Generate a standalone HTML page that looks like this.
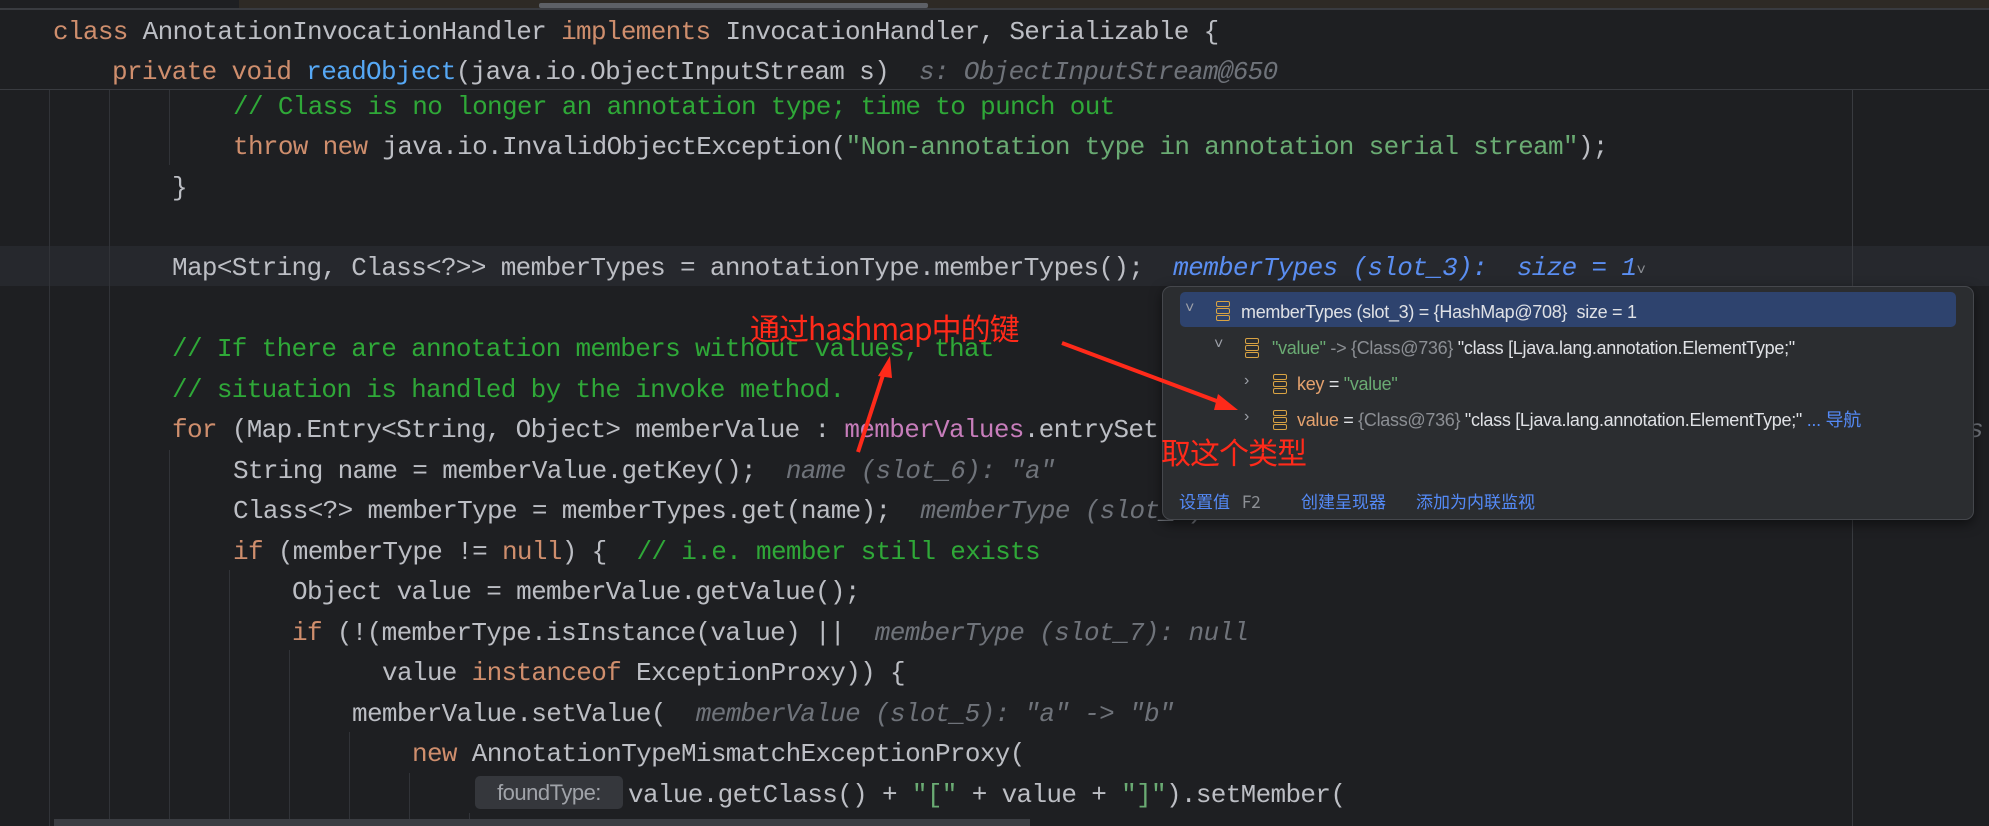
<!DOCTYPE html>
<html><head><meta charset="utf-8">
<style>
html,body{margin:0;padding:0;width:1989px;height:826px;overflow:hidden;}
body{background:#1e1f22;position:relative;font-family:"Liberation Mono",monospace;}
.l{position:absolute;height:40px;line-height:40px;font-size:26px;letter-spacing:-0.66px;color:#bcbec4;white-space:pre;}
.k{color:#cf8e6d}.m{color:#56a8f5}.c{color:#2fa838}.s{color:#6aab73}.p{color:#c77dbb}
.h{color:#6f737a;font-style:italic}
.hb{color:#5a8ef2;font-style:italic}
.g{position:absolute;width:1px;background:#313338;}
.pop{position:absolute;left:1162px;top:286px;width:810px;height:232px;background:#2b2d30;border:1px solid #45474c;border-radius:9px;box-shadow:0 4px 12px rgba(0,0,0,.5);}
.r{position:absolute;height:34px;line-height:34px;font-family:"Liberation Sans","Noto Sans CJK SC",sans-serif;font-size:18px;color:#dfe1e5;white-space:pre;letter-spacing:-0.3px}
.chev{position:absolute;font-family:"Liberation Sans",sans-serif;color:#9da0a8;font-size:16px;}
.ic{position:absolute;width:14px;height:20px;}
.ic i{display:block;height:4px;border:1.5px solid #d9a343;border-radius:2px;margin-bottom:1px}
.red{position:absolute;color:#ff2a1a;font-family:"Noto Sans CJK SC","Liberation Sans",sans-serif;font-size:30px;line-height:34px;white-space:pre;letter-spacing:-1px}
.bt{position:absolute;top:488px;font-family:"Noto Sans CJK SC","Liberation Sans",sans-serif;font-size:17px;color:#548af7;line-height:26px}
</style></head><body>
<div style="position:absolute;left:0;top:0;width:1989px;height:9px;background:#1e1f22"></div>
<div style="position:absolute;left:239px;top:0;width:1750px;height:8px;background:#2e2a25"></div>
<div style="position:absolute;left:539px;top:3px;width:389px;height:5px;background:#5d6066;border-radius:2px"></div>
<div style="position:absolute;left:0;top:8px;width:1989px;height:2px;background:#393b40"></div>
<div style="position:absolute;left:0;top:89px;width:1989px;height:1px;background:#393b40"></div>
<div class="l" style="left:53px;top:12px"><span class="k">class</span> AnnotationInvocationHandler <span class="k">implements</span> InvocationHandler, Serializable {</div>
<div class="l" style="left:112px;top:52px"><span class="k">private void</span> <span class="m">readObject</span>(java.io.ObjectInputStream s)  <span class="h">s: ObjectInputStream@650</span></div>
<div style="position:absolute;left:0;top:246px;width:1989px;height:40px;background:#26282d"></div>
<div class="g" style="left:1852px;top:90px;height:736px;background:#393b40"></div>
<div class="g" style="left:49px;top:90px;height:736px"></div>
<div class="g" style="left:109px;top:90px;height:736px"></div>
<div class="g" style="left:169px;top:90px;height:75px"></div>
<div class="g" style="left:169px;top:450px;height:376px"></div>
<div class="g" style="left:229px;top:570px;height:256px"></div>
<div class="g" style="left:289px;top:650px;height:176px"></div>
<div class="g" style="left:349px;top:732px;height:94px"></div>
<div class="g" style="left:409px;top:773px;height:53px"></div>
<div class="g" style="left:469px;top:813px;height:13px"></div>
<div class="l" style="left:233px;top:87px"><span class="c">// Class is no longer an annotation type; time to punch out</span></div>
<div class="l" style="left:233px;top:127px"><span class="k">throw new</span> java.io.InvalidObjectException(<span class="s">"Non-annotation type in annotation serial stream"</span>);</div>
<div class="l" style="left:172px;top:168px">}</div>
<div class="l" style="left:172px;top:248px">Map&lt;String, Class&lt;?&gt;&gt; memberTypes = annotationType.memberTypes();  <span class="hb">memberTypes (slot_3):  size = 1</span><span style="color:#8a8d93;font-size:16px">˅</span></div>
<div class="l" style="left:172px;top:329px"><span class="c">// If there are annotation members without values, that</span></div>
<div class="l" style="left:172px;top:370px"><span class="c">// situation is handled by the invoke method.</span></div>
<div class="l" style="left:172px;top:410px"><span class="k">for</span> (Map.Entry&lt;String, Object&gt; memberValue : <span class="p">memberValues</span>.entrySet())</div>
<div class="l" style="left:1968px;top:410px"><span class="h">s</span></div>
<div class="l" style="left:233px;top:451px">String name = memberValue.getKey();  <span class="h">name (slot_6): "a"</span></div>
<div class="l" style="left:233px;top:491px">Class&lt;?&gt; memberType = memberTypes.get(name);  <span class="h">memberType (slot_7): null</span></div>
<div class="l" style="left:233px;top:532px"><span class="k">if</span> (memberType != <span class="k">null</span>) {  <span class="c">// i.e. member still exists</span></div>
<div class="l" style="left:292px;top:572px">Object value = memberValue.getValue();</div>
<div class="l" style="left:292px;top:613px"><span class="k">if</span> (!(memberType.isInstance(value) ||  <span class="h">memberType (slot_7): null</span></div>
<div class="l" style="left:382px;top:653px">value <span class="k">instanceof</span> ExceptionProxy)) {</div>
<div class="l" style="left:352px;top:694px">memberValue.setValue(  <span class="h">memberValue (slot_5): "a" -&gt; "b"</span></div>
<div class="l" style="left:412px;top:734px"><span class="k">new</span> AnnotationTypeMismatchExceptionProxy(</div>
<div style="position:absolute;left:475px;top:776px;width:148px;height:33px;background:#35373c;border-radius:5px;color:#a0a3a9;font-family:'Liberation Sans',sans-serif;font-size:22px;line-height:33px;text-align:center;letter-spacing:-0.5px">foundType:</div>
<div class="l" style="left:628px;top:775px">value.getClass() + <span class="s">"["</span> + value + <span class="s">"]"</span>).setMember(</div>
<div style="position:absolute;left:54px;top:819px;width:976px;height:7px;background:#3b3d42"></div>
<div class="pop"></div>
<div style="position:absolute;left:1180px;top:292px;width:776px;height:35px;background:#2e436e;border-radius:5px"></div>
<div class="chev" style="left:1185px;top:300px">˅</div>
<div class="ic" style="left:1216px;top:301px"><i></i><i></i><i></i></div>
<div class="r" style="left:1241px;top:295px">memberTypes (slot_3) = {HashMap@708}  size = 1</div>
<div class="chev" style="left:1214px;top:336px">˅</div>
<div class="ic" style="left:1245px;top:338px"><i></i><i></i><i></i></div>
<div class="r" style="left:1272px;top:331px"><span style="color:#6aab73">"value"</span><span style="color:#8c8f94"> -&gt; {Class@736}</span> "class [Ljava.lang.annotation.ElementType;"</div>
<div class="chev" style="left:1244px;top:372px">›</div>
<div class="ic" style="left:1273px;top:374px"><i></i><i></i><i></i></div>
<div class="r" style="left:1297px;top:367px"><span style="color:#e5a26e">key</span> = <span style="color:#6aab73">"value"</span></div>
<div class="chev" style="left:1244px;top:408px">›</div>
<div class="ic" style="left:1273px;top:410px"><i></i><i></i><i></i></div>
<div class="r" style="left:1297px;top:403px"><span style="color:#e5a26e">value</span> = <span style="color:#8c8f94">{Class@736}</span> "class [Ljava.lang.annotation.ElementType;" <span style="color:#548af7">... 导航</span></div>
<div class="bt" style="left:1179px">设置值 <span style="color:#8c8f94;margin-left:8px">F2</span></div>
<div class="bt" style="left:1301px">创建呈现器</div>
<div class="bt" style="left:1416px">添加为内联监视</div>
<div class="red" style="left:750px;top:310px">通过hashmap中的键</div>
<div class="red" style="left:1161px;top:434px">取这个类型</div>
<svg style="position:absolute;left:0;top:0" width="1989" height="826">
<line x1="858" y1="452" x2="884" y2="372" stroke="#ff2a1a" stroke-width="4"/>
<polygon points="890,356 878,376 892,378" fill="#ff2a1a"/>
<line x1="1062" y1="343" x2="1222" y2="403" stroke="#ff2a1a" stroke-width="4"/>
<polygon points="1238,410 1218,394 1214,410" fill="#ff2a1a"/>
</svg>
</body></html>
